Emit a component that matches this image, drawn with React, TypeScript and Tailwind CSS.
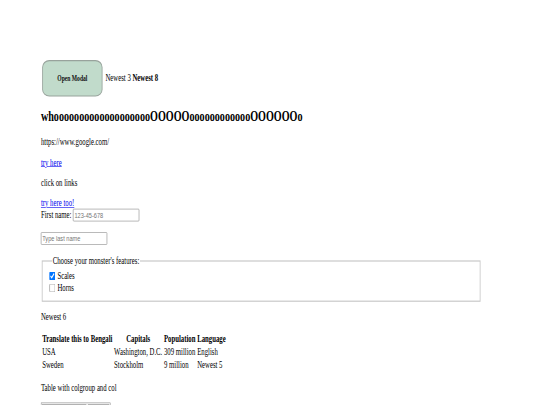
import React from "react";

const linkCls = "text-[#0000ee] underline";
const inputCls =
  "w-[157px] h-[21px] border border-[#767676] rounded-[2px] px-[2px] py-[1px] font-['Liberation_Sans',Arial,sans-serif] text-[13.33px] text-black placeholder:text-[#757575] align-baseline";

const heading = "wh" + "o".repeat(19) + "O".repeat(5) + "o".repeat(12) + "O".repeat(6) + "o";

const Features = () => (
  <fieldset className="mx-[2px] px-[12px] pt-[6px] pb-[11px] border-2 border-solid border-[#c8c8c8]">
    <legend className="ml-[10px] px-[2px]">Choose your monster's features:</legend>
    <div>
      <input type="checkbox" id="scales" defaultChecked className="ml-[4px] mr-[5px] my-[3px] w-[14px] h-[14px] align-[-2px]" />
      <label htmlFor="scales">Scales</label>
    </div>
    <div>
      <input type="checkbox" id="horns" className="ml-[4px] mr-[5px] my-[3px] w-[14px] h-[14px] align-[-2px]" />
      <label htmlFor="horns">Horns</label>
    </div>
  </fieldset>
);

const Countries = () => (
  <table className="border-separate border-spacing-[2px]">
    <tbody>
      <tr>
        <th className="p-[1px] font-bold text-center">Translate this to Bengali</th>
        <th className="p-[1px] font-bold text-center">Capitals</th>
        <th className="p-[1px] font-bold text-center">Population</th>
        <th className="p-[1px] font-bold text-center">Language</th>
      </tr>
      <tr>
        <td className="p-[1px]">USA</td>
        <td className="p-[1px]">Washington, D.C.</td>
        <td className="p-[1px]">309 million</td>
        <td className="p-[1px]">English</td>
      </tr>
      <tr>
        <td className="p-[1px]">Sweden</td>
        <td className="p-[1px]">Stockholm</td>
        <td className="p-[1px]">9 million</td>
        <td className="p-[1px]">Newest 5</td>
      </tr>
    </tbody>
  </table>
);

const App = () => {
  return (
    <div className="h-screen w-full overflow-hidden bg-white">
      <div className="w-[1280px] origin-top-left scale-x-[0.4219] scale-y-[0.6] font-['Liberation_Serif','Times_New_Roman',serif] text-[16px] leading-[normal] text-black">
        <div className="ml-[97px] w-[1044px] pt-[100px]">
          {/* top line */}
          <div>
            <button className="ml-[3px] mr-[7px] w-[143px] h-[61px] bg-[#c1dbcb] border-2 border-[#98a39c] rounded-[17px/12px] font-['Liberation_Serif',serif] text-[13.33px] font-bold text-[#111]">
              Open Modal
            </button>
            Newest 3 <b>Newest 8</b>
          </div>

          <h2 className="text-[24px] font-bold my-[19.92px]">{heading}</h2>

          <p className="my-4">https://www.google.com/</p>
          <p className="my-4">
            <a href="#" className={linkCls}>try here</a>
          </p>
          <p className="my-4">click on links</p>

          <a href="#" className={linkCls}>try here too!</a>
          <br />
          First name: <input type="text" placeholder="123-45-678" className={inputCls} />
          <br />
          <br />
          <input type="text" placeholder="Type last name" className={inputCls} />
          <br />
          <br />

          <Features />

          <p className="my-4">Newest 6</p>

          <Countries />

          <p className="my-4">Table with colgroup and col</p>

          {/* colgroup table, only its top shows */}
          <table className="border-separate border-spacing-[2px] border border-[#808080]">
            <tbody>
              <tr>
                <td className="w-[106px] h-[24px] border border-[#808080] p-[1px]">&nbsp;</td>
                <td className="w-[52px] h-[24px] border border-[#808080] p-[1px]">&nbsp;</td>
              </tr>
            </tbody>
          </table>
        </div>
      </div>
    </div>
  );
};

export default App;
